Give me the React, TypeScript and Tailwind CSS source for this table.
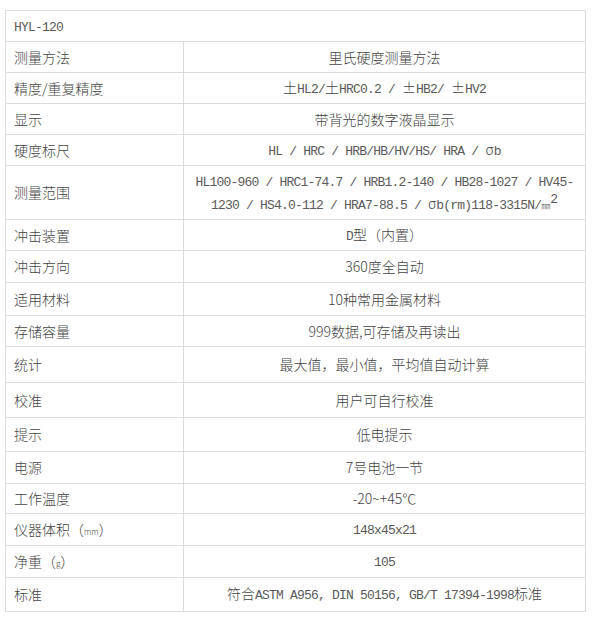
import type { ReactNode } from "react";

const CJK = "font-['Noto_Sans_CJK_SC',sans-serif]";

/** Latin runs get a narrow mono face so they keep the 7px half-width of the original. */
function SimSun({ text }: { text: string }) {
  const parts = text.split(/([\x20-\x7e]+)/);
  return (
    <>
      {parts.map((p, i) =>
        /^[\x20-\x7e]+$/.test(p) ? (
          <span
            key={i}
            className="font-['Liberation_Mono',monospace] text-[13px] tracking-[-0.8px] whitespace-pre text-[#5a5a5a]"
          >
            {p}
          </span>
        ) : (
          <span key={i}>{p}</span>
        )
      )}
    </>
  );
}

type Row = { label: ReactNode; value: ReactNode; h: string };

const rows: Row[] = [
  { label: "测量方法", value: "里氏硬度测量方法", h: "h-[31px]" },
  {
    label: "精度/重复精度",
    value: <SimSun text="土HL2/土HRC0.2 / ±HB2/ ±HV2" />,
    h: "h-[31px]",
  },
  { label: "显示", value: "带背光的数字液晶显示", h: "h-[31px]" },
  {
    label: "硬度标尺",
    value: <SimSun text="HL / HRC / HRB/HB/HV/HS/ HRA / σb" />,
    h: "h-[31px]",
  },
  {
    label: "测量范围",
    value: (
      <div className="leading-[21px]">
        <SimSun text="HL100-960 / HRC1-74.7 / HRB1.2-140 / HB28-1027 / HV45-" />
        <br />
        <SimSun text="1230 / HS4.0-112 / HRA7-88.5 / σb(rm)118-3315N/" />
        <span className="text-[9px]">㎜</span>
        <sup className="relative -top-[6px] font-['Liberation_Mono',monospace] text-[13px] text-[#5a5a5a]">2</sup>
      </div>
    ),
    h: "h-[54px]",
  },
  { label: "冲击装置", value: <SimSun text="D型（内置）" />, h: "h-[31px]" },
  { label: "冲击方向", value: "360度全自动", h: "h-[32px]" },
  { label: "适用材料", value: "10种常用金属材料", h: "h-[33px]" },
  { label: "存储容量", value: "999数据,可存储及再读出", h: "h-[31px]" },
  { label: "统计", value: "最大值，最小值，平均值自动计算", h: "h-[36px]" },
  { label: "校准", value: "用户可自行校准", h: "h-[35px]" },
  { label: "提示", value: "低电提示", h: "h-[34px]" },
  { label: "电源", value: "7号电池一节", h: "h-[32px]" },
  { label: "工作温度", value: "-20~+45℃", h: "h-[30px]" },
  {
    label: (
      <>
        仪器体积（<span className="text-[8px]">mm</span>）
      </>
    ),
    value: <SimSun text="148x45x21" />,
    h: "h-[32px]",
  },
  {
    label: (
      <>
        净重（<span className="text-[8px]">g</span>）
      </>
    ),
    value: <SimSun text="105" />,
    h: "h-[32px]",
  },
  {
    label: "标准",
    value: <SimSun text="符合ASTM A956, DIN 50156, GB/T 17394-1998标准" />,
    h: "h-[34px]",
  },
];

export default function App() {
  return (
    <div className={`min-h-[622px] bg-white pt-[10px] pl-[5px] text-[14px] font-light text-[#444] ${CJK}`}>
      <table className="w-[581px] table-fixed border-collapse">
        <colgroup>
          <col className="w-[178px]" />
          <col />
        </colgroup>
        <tbody>
          <tr className="h-[31px]">
            <td colSpan={2} className="border border-[#dcdcdc] px-[8px] align-middle">
              <SimSun text="HYL-120" />
            </td>
          </tr>
          {rows.map((r, i) => (
            <tr key={i} className={r.h}>
              <td className="border border-[#dcdcdc] px-[8px] align-middle whitespace-nowrap">{r.label}</td>
              <td className="border border-[#dcdcdc] px-[6px] text-center align-middle">{r.value}</td>
            </tr>
          ))}
        </tbody>
      </table>
    </div>
  );
}
